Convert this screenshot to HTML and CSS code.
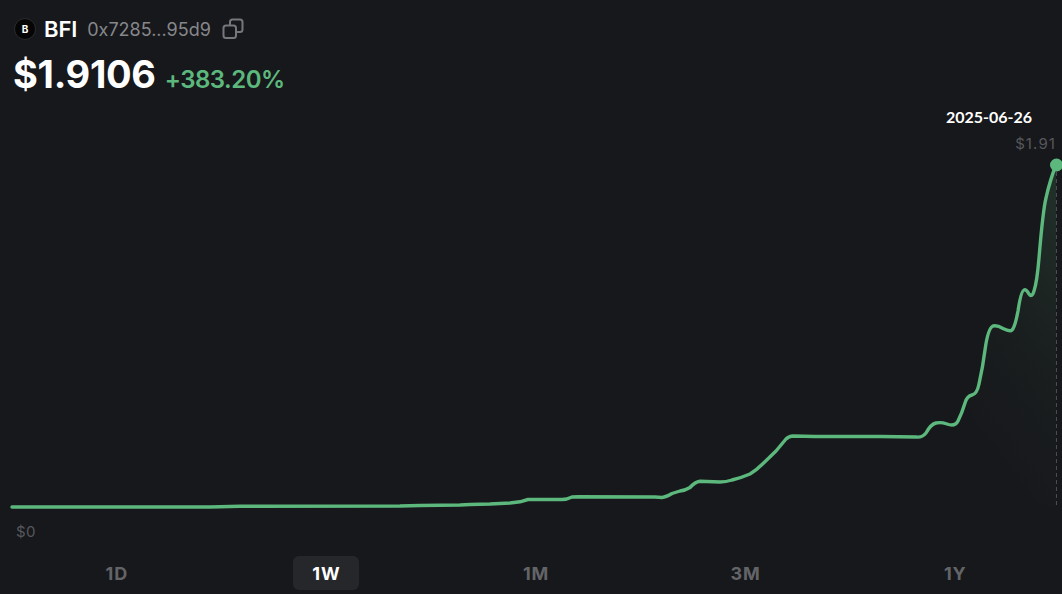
FILE: index.html
```html
<!DOCTYPE html>
<html lang="en">
<head>
<meta charset="utf-8">
<title>BFI</title>
<link rel="stylesheet" href="styles.css">
</head>
<body>
<main class="page">
  <header class="head">
    <div class="token">
      <span class="logo">B</span>
      <span class="symbol">BFI</span>
      <span class="address">0x7285...95d9</span>
      <svg class="copy" width="22" height="22" viewBox="0 0 22 22" fill="none">
        <path d="M8 7V4a2.5 2.5 0 0 1 2.5-2.5H18A2.5 2.5 0 0 1 20.500 4v7.500A2.500 2.500 0 0 1 18 14h-4" />
        <rect x="1.500" y="7.500" width="12.500" height="12.500" rx="2.500" />
      </svg>
    </div>
    <div class="quote">
      <span class="price">$1.9106</span>
      <span class="change">+383.20%</span>
    </div>
  </header>
  <svg class="chart" width="1062" height="456" viewBox="0 100 1062 456">
    <defs>
      <linearGradient id="area" x1="1" y1="0" x2="0.55" y2="0.85">
        <stop offset="0" stop-color="#5cb87d" stop-opacity="0.16"/>
        <stop offset="0.55" stop-color="#5cb87d" stop-opacity="0.04"/>
        <stop offset="1" stop-color="#5cb87d" stop-opacity="0"/>
      </linearGradient>
    </defs>
    <path class="area" d="M916 437Q922 438 926 433Q931 424 936 423Q941 422 947 424Q955 427 958 421Q962 413 965 403Q967 396 972 395Q977 394 979 384Q983 366 985 350Q988 328 993 326Q997 325 1003 328.500Q1010 332 1012 330Q1015 327 1018 311Q1021 291 1024 290Q1026 289 1029 294Q1032 298 1034 291Q1037 282 1039 258Q1043 210 1046 198Q1050 180 1056 165V507H916Z"/>
    <line class="guide" x1="1056.500" y1="165" x2="1056.500" y2="507"/>
    <path class="line" d="M12 507L210 507L240 506.200L400 506L420 505.500L460 505L470 504.500L490 504L510 503L520 501.800L528 499.500L562 499.500Q567 499.500 572 497L578 496.800L655 497L662 497.500Q666 497 672 493.500L680 491Q685 490.500 690 487.500Q695 482 700 481.300L720 482Q726 482 732 480Q742 477.500 750 474Q756 470.500 762 464.500L776 451L786 439Q789 436 793 436L815 436.500L880 436.500L916 437Q922 438 926 433Q931 424 936 423Q941 422 947 424Q955 427 958 421Q962 413 965 403Q967 396 972 395Q977 394 979 384Q983 366 985 350Q988 328 993 326Q997 325 1003 328.500Q1010 332 1012 330Q1015 327 1018 311Q1021 291 1024 290Q1026 289 1029 294Q1032 298 1034 291Q1037 282 1039 258Q1043 210 1046 198Q1050 180 1056 165"/>
    <circle class="dot" cx="1056.500" cy="165" r="6.500"/>
    <text class="date" x="989" y="123" text-anchor="middle">2025-06-26</text>
    <text class="axis axis-top" x="1056" y="149" text-anchor="end">$1.91</text>
    <text class="axis" x="16" y="537">$0</text>
  </svg>
  <nav class="ranges">
    <button class="range">1D</button>
    <button class="range active">1W</button>
    <button class="range">1M</button>
    <button class="range">3M</button>
    <button class="range">1Y</button>
  </nav>
</main>
</body>
</html>
```
FILE: styles.css
```css
* { box-sizing: border-box; }
html, body { margin: 0; height: 100%; background: #17181b; overflow: hidden; }
.page { width: 1062px; height: 594px; font-family: "Inter", "Noto Sans", sans-serif; color: #fff; }
.head { padding: 17px 0 0 14px; height: 100px; }
.token { display: flex; align-items: center; height: 24px; }
.logo {
  width: 22px; height: 22px; border-radius: 50%; background: #050505;
  border: 1px solid #2a2b2e; display: flex; align-items: center; justify-content: center;
  font-size: 10px; font-weight: 700; margin-right: 8px;
}
.symbol { font-size: 22px; font-weight: 600; letter-spacing: -0.1px; margin-right: 10px; }
.address { font-size: 18px; color: #86878b; letter-spacing: 0; margin-right: 11px; }
.copy { stroke: #76777b; stroke-width: 2; }
.quote { display: flex; align-items: baseline; margin-top: 10px; margin-left: -1px; }
.price { font-size: 38px; font-weight: 700; letter-spacing: -0.3px; margin-right: 9px; }
.change { font-size: 24px; font-weight: 600; color: #5cb87d; letter-spacing: -0.5px; }
.chart { display: block; }
.area { fill: url(#area); stroke: none; }
.guide { stroke: #4b4c50; stroke-width: 1; stroke-dasharray: 4 3; }
.line { fill: none; stroke: #5cb87d; stroke-width: 3.4; stroke-linecap: round; stroke-linejoin: round; }
.dot { fill: #5cb87d; }
.date { font-family: "Lato", sans-serif; font-size: 16px; font-weight: 700; fill: #fff; }
.axis { font-size: 15px; fill: #56575b; letter-spacing: 0.5px; }
.axis-top { letter-spacing: 1.1px; }
.ranges { display: grid; grid-template-columns: repeat(5, 209.6px); padding-left: 12px; height: 34px; }
.range {
  justify-self: center; width: 66px; height: 34px; border: 0; border-radius: 6px; background: none;
  font-family: inherit; font-size: 18px; font-weight: 700; color: #636468; padding: 0; letter-spacing: 0.8px;
}
.range.active { background: #26272b; color: #fff; }
```
